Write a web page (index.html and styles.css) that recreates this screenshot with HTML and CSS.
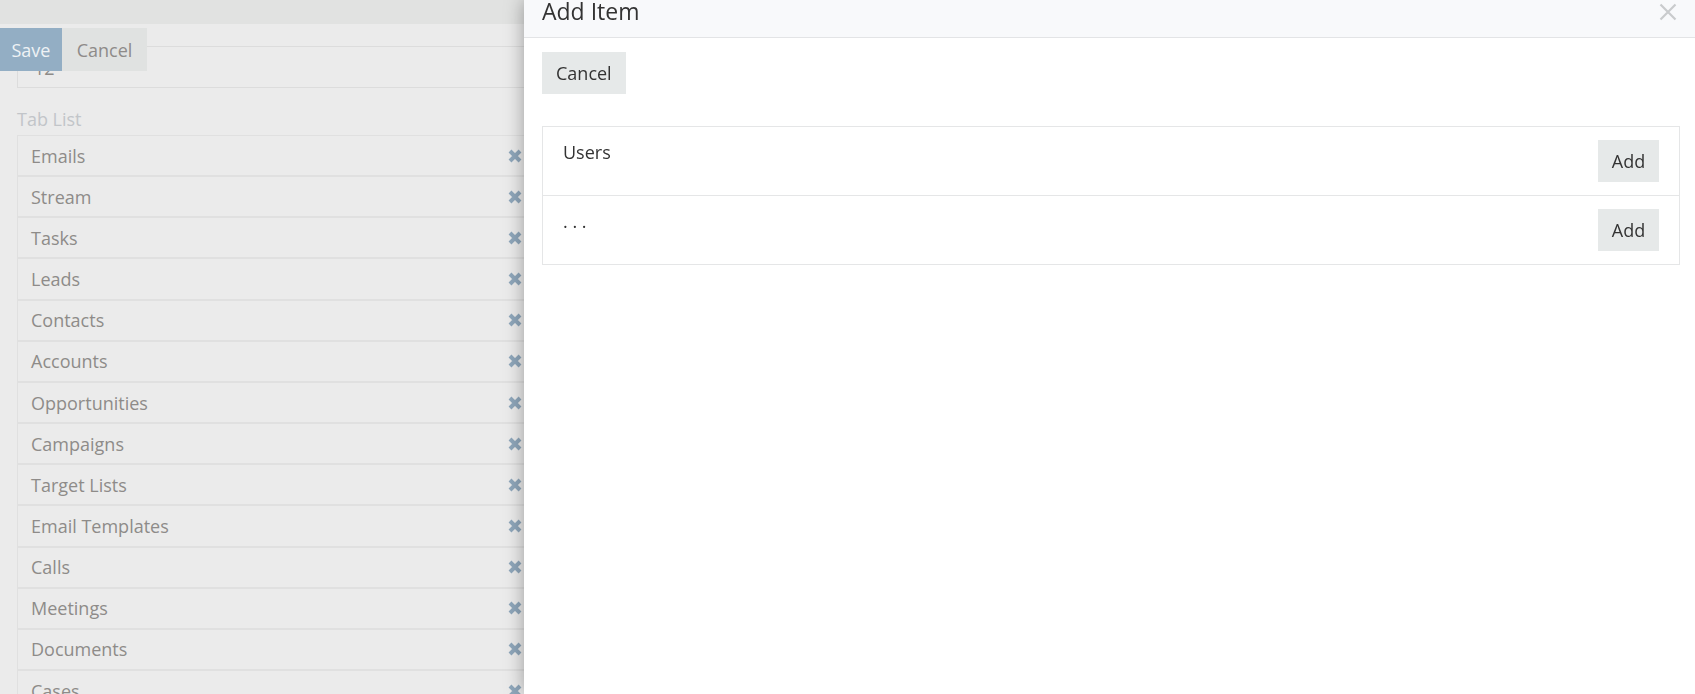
FILE: index.html
```html
<!DOCTYPE html>
<html>
<head>
<meta charset="utf-8">
<link rel="stylesheet" href="styles.css">
</head>
<body>
<div class="page">
  <div class="topbar"></div>
  <div class="content">
    <div class="field">12</div>
    <div class="label">Tab List</div>
    <ul class="tabs">
      <li class="tab"><span>Emails</span><svg class="rm" viewBox="0 0 16 16"><path d="M3 3L13 13M13 3L3 13"/></svg></li>
      <li class="tab"><span>Stream</span><svg class="rm" viewBox="0 0 16 16"><path d="M3 3L13 13M13 3L3 13"/></svg></li>
      <li class="tab"><span>Tasks</span><svg class="rm" viewBox="0 0 16 16"><path d="M3 3L13 13M13 3L3 13"/></svg></li>
      <li class="tab"><span>Leads</span><svg class="rm" viewBox="0 0 16 16"><path d="M3 3L13 13M13 3L3 13"/></svg></li>
      <li class="tab"><span>Contacts</span><svg class="rm" viewBox="0 0 16 16"><path d="M3 3L13 13M13 3L3 13"/></svg></li>
      <li class="tab"><span>Accounts</span><svg class="rm" viewBox="0 0 16 16"><path d="M3 3L13 13M13 3L3 13"/></svg></li>
      <li class="tab"><span>Opportunities</span><svg class="rm" viewBox="0 0 16 16"><path d="M3 3L13 13M13 3L3 13"/></svg></li>
      <li class="tab"><span>Campaigns</span><svg class="rm" viewBox="0 0 16 16"><path d="M3 3L13 13M13 3L3 13"/></svg></li>
      <li class="tab"><span>Target Lists</span><svg class="rm" viewBox="0 0 16 16"><path d="M3 3L13 13M13 3L3 13"/></svg></li>
      <li class="tab"><span>Email Templates</span><svg class="rm" viewBox="0 0 16 16"><path d="M3 3L13 13M13 3L3 13"/></svg></li>
      <li class="tab"><span>Calls</span><svg class="rm" viewBox="0 0 16 16"><path d="M3 3L13 13M13 3L3 13"/></svg></li>
      <li class="tab"><span>Meetings</span><svg class="rm" viewBox="0 0 16 16"><path d="M3 3L13 13M13 3L3 13"/></svg></li>
      <li class="tab"><span>Documents</span><svg class="rm" viewBox="0 0 16 16"><path d="M3 3L13 13M13 3L3 13"/></svg></li>
      <li class="tab"><span>Cases</span><svg class="rm" viewBox="0 0 16 16"><path d="M3 3L13 13M13 3L3 13"/></svg></li>
    </ul>
  </div>
  <div class="btnbar">
    <button class="btn-save">Save</button>
    <button class="btn-cancel">Cancel</button>
  </div>
</div>

<div class="modal">
  <div class="modal-header">
    <h4 class="modal-title">Add Item</h4>
    <svg class="close" viewBox="0 0 18 18"><path d="M1.5 1.5L16.5 16.5M16.5 1.5L1.5 16.5"/></svg>
  </div>
  <div class="modal-body">
    <button class="btn">Cancel</button>
    <ul class="items">
      <li class="item"><span>Users</span><button class="btn">Add</button></li>
      <li class="item"><span>. . .</span><button class="btn">Add</button></li>
    </ul>
  </div>
</div>
</body>
</html>
```

FILE: styles.css
```css
* { box-sizing: border-box; }
html, body { margin: 0; padding: 0; }
body {
  width: 1695px;
  height: 694px;
  overflow: hidden;
  background: #ebebeb;
  font-family: "Open Sans", "Noto Sans", sans-serif;
  font-size: 18px;
  line-height: 24px;
}
.page {
  position: relative;
  width: 100%;
  height: 100%;
}
.topbar {
  height: 24px;
  background: #e1e2e1;
}
.content {
  padding-left: 17px;
  width: 540px;
}
.field {
  margin-top: 22px;
  height: 42px;
  border: 1px solid #dcdcdc;
  padding: 9px 16px 0;
  color: #8e8b89;
}
.label {
  margin-top: 19px;
  margin-bottom: 4px;
  color: #c2c5c9;
}
.tabs {
  list-style: none;
  margin: 0;
  padding: 0;
}
.tab {
  display: flex;
  align-items: center;
  justify-content: space-between;
  height: 41.17px;
  border: 1px solid #e0e0e0;
  padding: 0 16px 0 13px;
  color: #8e8b89;
}
.rm {
  width: 16px;
  height: 16px;
  fill: none;
  stroke: #8fa7bb;
  stroke-width: 4;
  stroke-linecap: butt;
}
.btnbar {
  position: absolute;
  top: 28px;
  left: 0;
  display: flex;
}
.btnbar button {
  font-family: inherit;
  font-size: 18px;
  height: 43px;
  border: 0;
  padding: 0;
}
.btn-save {
  width: 62px;
  background: #93aec4;
  color: #eef2f5;
}
.btn-cancel {
  width: 85px;
  background: #e0e2e1;
  color: #8e8b89;
}

.modal {
  position: fixed;
  top: 0;
  right: 0;
  bottom: 0;
  left: 524px;
  background: #fff;
  box-shadow: 0 0 18px rgba(0, 0, 0, 0.35);
}
.modal-header {
  display: flex;
  justify-content: space-between;
  align-items: flex-start;
  height: 38px;
  background: #f8f9fb;
  border-bottom: 1px solid #e3e4e6;
  padding: 0 18px;
}
.modal-title {
  margin: -1px 0 0;
  font-size: 23px;
  font-weight: 400;
  line-height: 24px;
  color: #333;
}
.close {
  width: 18px;
  height: 18px;
  margin-top: 3px;
  fill: none;
  stroke: #c9cbcd;
  stroke-width: 2.2;
}
.modal-body {
  padding: 14px 15px 0 18px;
}
.btn {
  font-family: inherit;
  font-size: 18px;
  line-height: 24px;
  height: 42px;
  padding: 0 14px;
  border: 0;
  background: #e6e9e9;
  color: #333;
}
.items {
  list-style: none;
  margin: 32px 0 0;
  padding: 0;
  border: 1px solid #e5e6e7;
}
.item {
  display: flex;
  justify-content: space-between;
  align-items: flex-start;
  padding: 13px 20px;
  color: #333;
}
.item + .item {
  border-top: 1px solid #e5e6e7;
}
.item .btn {
  width: 61px;
  padding: 0;
}
```
